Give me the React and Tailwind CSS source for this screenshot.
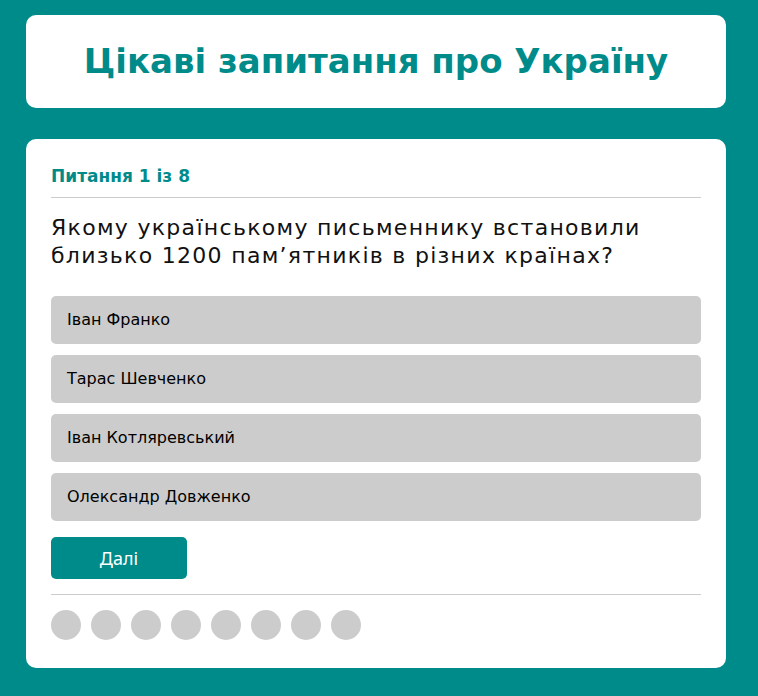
import { useState } from "react";

const options = [
  "Іван Франко",
  "Тарас Шевченко",
  "Іван Котляревський",
  "Олександр Довженко",
];

export default function App() {
  const [selected, setSelected] = useState(null);

  return (
    <div className="min-h-screen bg-[#008b8b] pl-[26px] pt-[15px] pb-[28px] font-['DejaVu_Sans',sans-serif]">
      <div className="flex h-[93px] w-[700px] items-center justify-center rounded-[10px] bg-white">
        <h1 className="text-[34px] font-bold text-[#008b8b]">
          Цікаві запитання про Україну
        </h1>
      </div>

      <div className="mt-[31px] w-[700px] rounded-[10px] bg-white px-[25px] pt-[25px] pb-[28px]">
        <div className="border-b border-[#cccccc] pb-[9px] text-[17px] leading-[24px] font-bold text-[#008b8b]">
          Питання 1 із 8
        </div>

        <p className="mt-[16px] text-[22px] leading-[28px] tracking-[1.3px] text-[#111111]">
          Якому українському письменнику встановили близько 1200 пам’ятників в
          різних країнах?
        </p>

        <div className="mt-[26px] flex flex-col gap-[11px]">
          {options.map((o, i) => (
            <button
              key={o}
              onClick={() => setSelected(i)}
              className={`flex h-[48px] items-center rounded-[5px] px-[16px] text-left text-[16px] text-black ${
                selected === i ? "bg-[#b5b5b5]" : "bg-[#cccccc]"
              }`}
            >
              {o}
            </button>
          ))}
        </div>

        <button className="mt-[16px] h-[42px] w-[136px] rounded-[5px] bg-[#008b8b] font-['Noto_Sans',sans-serif] text-[18px] text-white">
          Далі
        </button>

        <div className="mt-[15px] flex gap-[10px] border-t border-[#cccccc] pt-[15px]">
          {Array.from({ length: 8 }).map((_, i) => (
            <span key={i} className="h-[30px] w-[30px] rounded-full bg-[#cccccc]" />
          ))}
        </div>
      </div>
    </div>
  );
}
